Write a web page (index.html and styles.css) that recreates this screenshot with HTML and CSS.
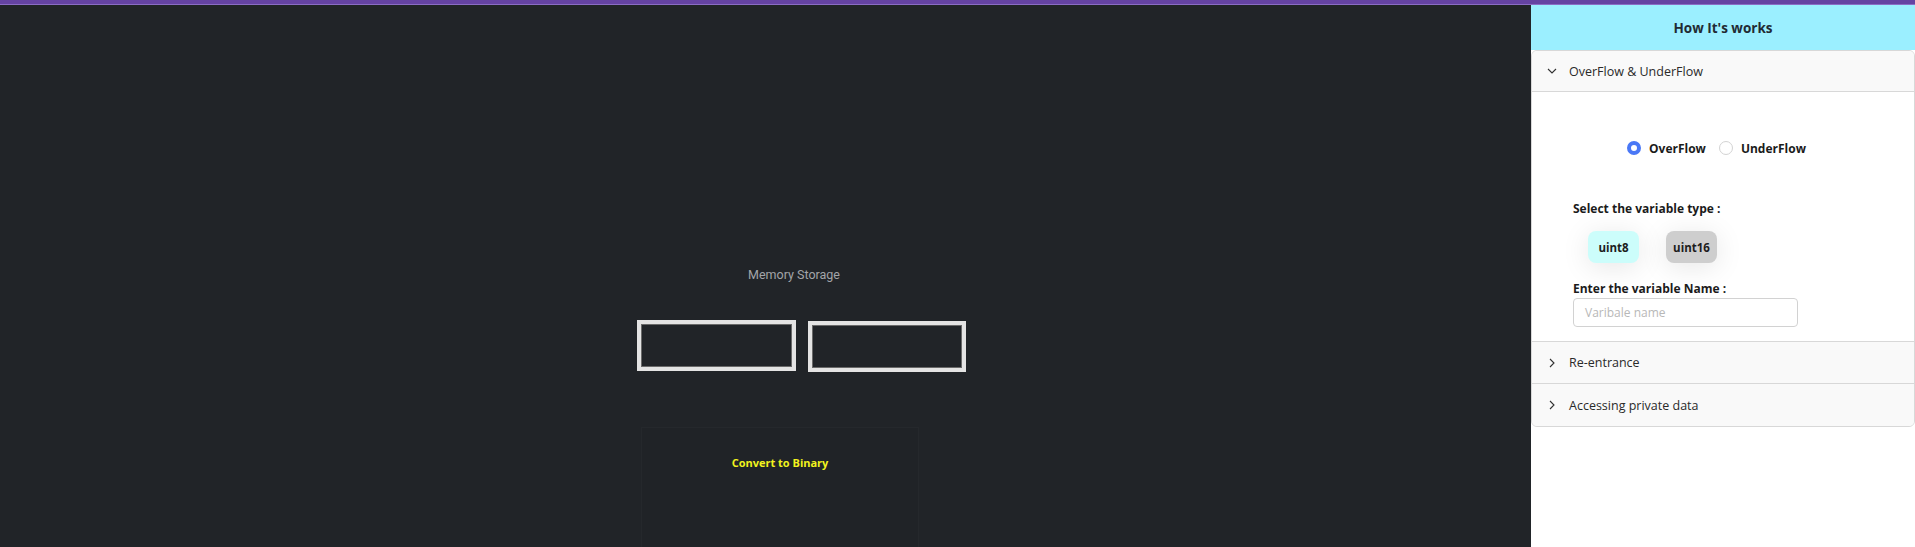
FILE: index.html
```html
<!DOCTYPE html>
<html>
<head>
<meta charset="utf-8">
<link rel="stylesheet" href="styles.css">
</head>
<body>
<div class="topbar"></div>
<div class="app">
  <main class="stage">
    <div class="stage-inner">
      <div class="mem-title">Memory Storage</div>
      <div class="mem-row">
        <div class="mem-box"></div>
        <div class="mem-box"></div>
      </div>
      <div class="convert">
        <div class="convert-text">Convert to Binary</div>
      </div>
    </div>
  </main>
  <aside class="side">
    <div class="side-head">How It's works</div>
    <div class="acc">
      <div class="acc-item">
        <div class="acc-head">
          <svg class="chev" width="10" height="10" viewBox="0 0 10 10"><path d="M1 3 L5 7 L9 3" fill="none" stroke="#333" stroke-width="1.1"/></svg>
          <span>OverFlow &amp; UnderFlow</span>
        </div>
        <div class="acc-body">
          <div class="radios">
            <label class="radio"><span class="dot on"></span>OverFlow</label>
            <label class="radio"><span class="dot"></span>UnderFlow</label>
          </div>
          <div class="lbl lbl-type">Select the variable type :</div>
          <div class="types">
            <div class="type t8">uint8</div>
            <div class="type t16">uint16</div>
          </div>
          <div class="lbl lbl-name">Enter the variable Name :</div>
          <div class="input">Varibale name</div>
        </div>
      </div>
      <div class="acc-item">
        <div class="acc-head">
          <svg class="chev" width="10" height="10" viewBox="0 0 10 10"><path d="M3 1 L7 5 L3 9" fill="none" stroke="#333" stroke-width="1.1"/></svg>
          <span>Re-entrance</span>
        </div>
      </div>
      <div class="acc-item last">
        <div class="acc-head">
          <svg class="chev" width="10" height="10" viewBox="0 0 10 10"><path d="M3 1 L7 5 L3 9" fill="none" stroke="#333" stroke-width="1.1"/></svg>
          <span>Accessing private data</span>
        </div>
      </div>
    </div>
  </aside>
</div>
</body>
</html>
```

FILE: styles.css
```css
* { box-sizing: border-box; }
html, body { margin: 0; padding: 0; height: 100%; }
body {
  background: #212428;
  overflow: hidden;
  font-family: "Open Sans", "Noto Sans", sans-serif;
}
.topbar {
  height: 5px;
  background: #6543a2;
  border-bottom: 1px solid #8b6cc4;
}
.app {
  display: flex;
  height: 542px;
}
.stage {
  flex: 1;
  background: #212428;
  overflow: hidden;
}
.stage-inner {
  display: flex;
  flex-direction: column;
  padding-left: 637px;
  padding-top: 262px;
}
.mem-title {
  width: 314px;
  text-align: center;
  font-family: Roboto, "Noto Sans", sans-serif;
  font-size: 12.5px;
  color: #a3a5a8;
  line-height: 16px;
}
.mem-row {
  display: flex;
  gap: 12px;
  margin-top: 37px;
}
.mem-box {
  width: 159px;
  height: 51px;
  border: 4px solid #e4e4e4;
  box-shadow: inset 0 0 0 1px #6a6a6a;
}
.mem-box + .mem-box { width: 158px; margin-top: 1px; }
.convert {
  margin-top: 55px;
  margin-left: 4px;
  width: 278px;
  height: 130px;
  background: #202327;
  border: 1px solid #25282c;
  display: flex;
  justify-content: center;
}
.convert-text {
  margin-top: 27px;
  font-family: "Open Sans", "Noto Sans", sans-serif;
  font-weight: 700;
  font-size: 11px;
  color: #f2f21e;
}
.side {
  width: 384px;
  background: #ffffff;
  display: flex;
  flex-direction: column;
}
.side-head {
  height: 45px;
  background: #9befff;
  display: flex;
  align-items: center;
  justify-content: center;
  font-weight: 700;
  font-size: 13.5px;
  color: #222a33;
}
.acc {
  border: 1px solid #d8d8d8;
  border-radius: 6px;
  overflow: hidden;
}
.acc-item + .acc-item { border-top: 1px solid #d8d8d8; }
.acc-head {
  height: 41px;
  background: #f9f9f9;
  display: flex;
  align-items: center;
  padding-left: 15px;
  font-size: 12.5px;
  color: #2a2a2a;
  gap: 12px;
}
.acc-item:first-child .acc-head { border-bottom: 1px solid #d8d8d8; }
.acc-item.last .acc-head { height: 42px; }
.acc-body {
  height: 249px;
  padding: 47px 0 0 41px;
  display: flex;
  flex-direction: column;
}
.radios {
  display: flex;
  gap: 13px;
  padding-left: 54px;
  height: 18px;
  align-items: center;
}
.radio {
  display: flex;
  align-items: center;
  gap: 8px;
  font-weight: 700;
  font-size: 12px;
  color: #1b1b1b;
}
.dot {
  width: 14px;
  height: 14px;
  border-radius: 50%;
  border: 1px solid #d3d3d3;
  background: #fff;
}
.dot.on {
  border: 4px solid #4a78f6;
  background: #fff;
}
.lbl {
  font-weight: 700;
  font-size: 12px;
  color: #1b1b1b;
  line-height: 16px;
}
.lbl-type { margin-top: 44px; }
.types {
  display: flex;
  gap: 27px;
  padding-left: 15px;
  margin-top: 14px;
}
.type {
  width: 51px;
  height: 32px;
  border-radius: 8px;
  display: flex;
  align-items: center;
  justify-content: center;
  font-weight: 700;
  font-size: 11.5px;
  color: #1d1d1d;
  box-shadow: 0 4px 28px rgba(0,0,0,0.10);
}
.t8 { background: #ccfdfb; }
.t16 { background: #cecece; }
.lbl-name { margin-top: 18px; }
.input {
  margin-top: 1px;
  width: 225px;
  height: 29px;
  border: 1px solid #d2d2d2;
  border-radius: 4px;
  display: flex;
  align-items: center;
  padding-left: 11px;
  font-size: 12px;
  color: #b8b8b8;
}
```
